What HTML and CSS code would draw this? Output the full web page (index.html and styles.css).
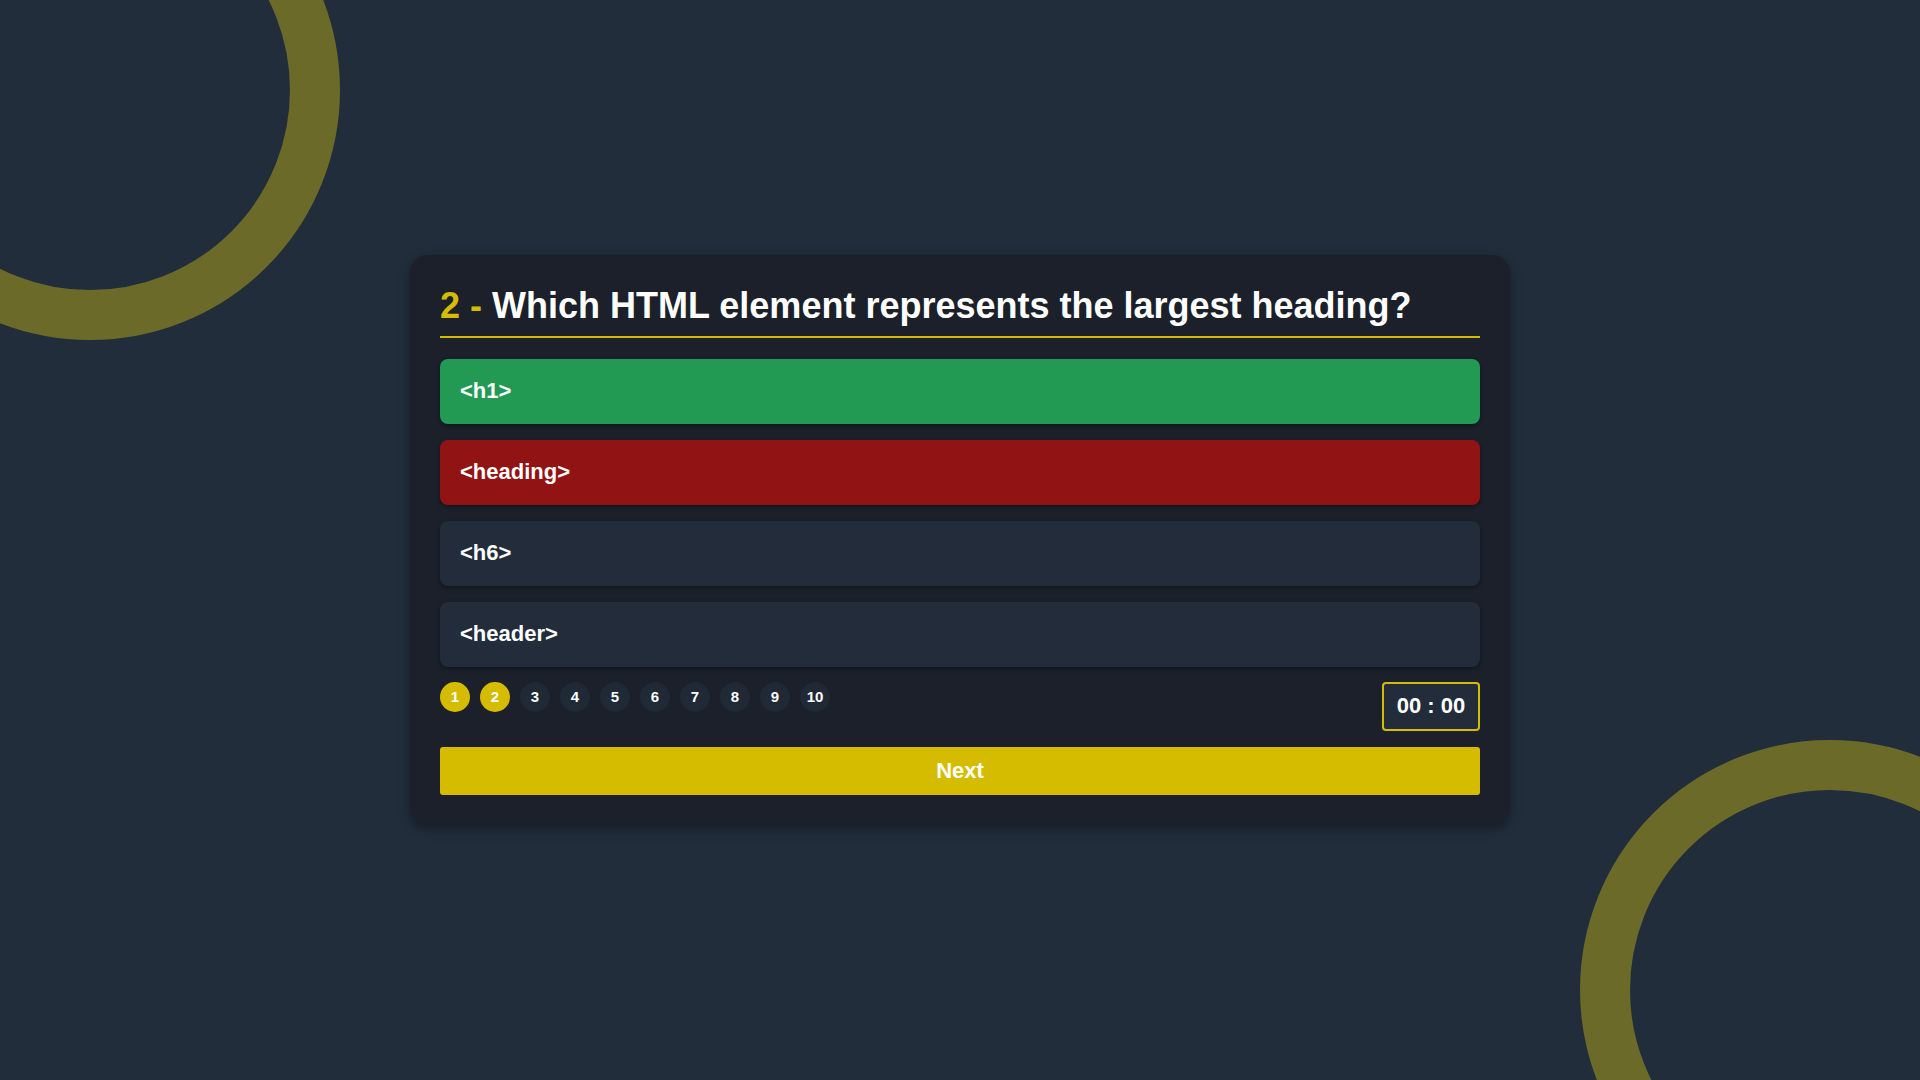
FILE: index.html
```html
<!DOCTYPE html>
<html lang="en">
<head>
<meta charset="utf-8">
<title>Quiz</title>
<link rel="stylesheet" href="styles.css">
</head>
<body>
<div class="backdrop">
  <div class="ring ring-tl"></div>
  <div class="ring ring-br"></div>
</div>
<main class="stage">
  <section class="card">
    <h2 class="question"><span class="qnum">2 -</span> Which HTML element represents the largest heading?</h2>
    <div class="options">
      <div class="option correct">&lt;h1&gt;</div>
      <div class="option wrong">&lt;heading&gt;</div>
      <div class="option">&lt;h6&gt;</div>
      <div class="option">&lt;header&gt;</div>
    </div>
    <div class="footer">
      <div class="bullets">
        <span class="bullet on">1</span>
        <span class="bullet on">2</span>
        <span class="bullet">3</span>
        <span class="bullet">4</span>
        <span class="bullet">5</span>
        <span class="bullet">6</span>
        <span class="bullet">7</span>
        <span class="bullet">8</span>
        <span class="bullet">9</span>
        <span class="bullet">10</span>
      </div>
      <div class="timer">00 : 00</div>
    </div>
    <button class="next">Next</button>
  </section>
</main>
</body>
</html>
```
FILE: styles.css
```css
* { box-sizing: border-box; }
html, body { margin: 0; padding: 0; }
body {
  width: 1920px;
  height: 1080px;
  overflow: hidden;
  background: #212d3b;
  font-family: "Liberation Sans", Arial, sans-serif;
  color: #fff;
  position: relative;
}
.backdrop {
  position: absolute;
  inset: 0;
  overflow: hidden;
}
.ring {
  position: absolute;
  width: 500px;
  height: 500px;
  border-radius: 50%;
  border: 50px solid #6b6a28;
}
.ring-tl { left: -160px; top: -160px; }
.ring-br { left: 1580px; top: 740px; }
.stage {
  position: relative;
  height: 1080px;
  display: flex;
  align-items: center;
  justify-content: center;
}
.card {
  width: 1100px;
  background: #1b202a;
  border-radius: 18px;
  padding: 30px;
  margin-top: -1px;
  box-shadow: 0 4px 12px rgba(0,0,0,0.35);
}
.question {
  margin: 0;
  font-size: 36px;
  font-weight: bold;
  line-height: 41px;
  padding-bottom: 10px;
  border-bottom: 2px solid #d6bc00;
}
.qnum { color: #d6bc00; }
.options {
  display: flex;
  flex-direction: column;
  gap: 16px;
  margin-top: 21px;
}
.option {
  height: 65px;
  display: flex;
  align-items: center;
  padding-left: 20px;
  font-size: 22px;
  font-weight: bold;
  background: #222c3a;
  border-radius: 8px;
  box-shadow: 0 2px 4px rgba(0,0,0,0.35);
}
.option.correct { background: #229a54; }
.option.wrong { background: #911313; }
.footer {
  display: flex;
  justify-content: space-between;
  align-items: flex-start;
  margin-top: 15px;
}
.bullets { display: flex; gap: 10px; }
.bullet {
  width: 30px;
  height: 30px;
  border-radius: 50%;
  background: #202936;
  display: flex;
  align-items: center;
  justify-content: center;
  font-size: 15px;
  font-weight: bold;
}
.bullet.on { background: #d6bc00; }
.timer {
  width: 98px;
  height: 49px;
  border: 2px solid #d6bc00;
  border-radius: 4px;
  background: #222c3a;
  display: flex;
  align-items: center;
  justify-content: center;
  font-size: 22px;
  font-weight: bold;
}
.next {
  display: block;
  width: 100%;
  height: 48px;
  margin-top: 16px;
  border: none;
  border-radius: 3px;
  background: #d6bc00;
  color: #fff;
  font-family: "Liberation Sans", Arial, sans-serif;
  font-size: 22px;
  font-weight: bold;
}
```
